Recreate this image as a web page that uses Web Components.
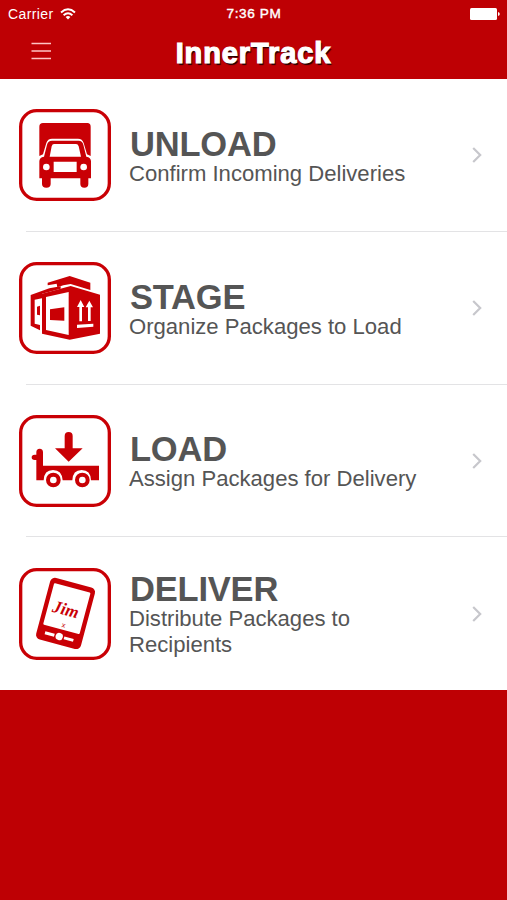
<!DOCTYPE html>
<html lang="en">
<head>
<meta charset="utf-8">
<title>InnerTrack</title>
<style>
body {
  margin: 0;
  min-height: 100vh;
  background: #be0004;
  font-family: "Liberation Sans", Arial, sans-serif;
}
</style>
</head>
<body>
<track-app></track-app>

<script>
// Icon artwork, all drawn inside the same 276 unit square frame.
const icons = {
  truck: `
    <path fill="#c90005" d="M88 168V80q0-11 11-11h133q10 0 10 11v88l-11-5-10-34q-4-13-17-13h-78q-13 0-17 13l-10 34z"/>
    <path fill="#c90005" fill-rule="evenodd" d="M88 184q0-12 14-14l9-36q3-12 15-12h80q11 0 14 12l9 36q14 2 14 14v51h-8v17q0 11-12 11t-12-11v-17h-89v17q0 11-13 11t-13-11v-17h-8z
      M119 170h94l-7-31q-2-7-8-7h-66q-5 0-7 7z M131 185v31h69v-31z"/>
    <circle cx="109" cy="201" r="10" fill="#fff"/>
    <circle cx="221" cy="201" r="10" fill="#fff"/>`,
  boxes: `
    <path fill="#c90005" d="M113 97v-8l66-20 62 20v22l-59-18-22 4-18 6-2-11z"/>
    <path fill="#c90005" d="M62 126l56-20 34-6v7l-56 15v14l-22 4v72l16 4v16l-28-14z"/>
    <path fill="#c90005" d="M81 161l9-3v29l-9-2z"/>
    <path fill="#c90005" d="M96 122l86-23 88 26v117l-91 18-83-18z"/>
    <path fill="#fff" d="M108 132l68-15v129l-68-15z"/>
    <path fill="#c90005" d="M120 169l43-6v40l-43-2z"/>
    <path fill="#fff" d="M201 162l11-21 11 21h-7v43h-8v-43z M227 163l11-20 11 20h-7v41h-8v-41z M201 215l49-3v9l-49 4z"/>`,
  cart: `
    <path fill="#c90005" d="M164 127V90q0-12 12-12t12 12v37h30l-42 40-41-40z"/>
    <path fill="#c90005" d="M79 223v-61h-5q-9 0-9-8t9-8h5v-7q0-11 10-11t10 11v40h168v44h-24q-1-31-28-31t-28 31h-29q-2-31-29-31t-28 31z"/>
    <g fill="#fff" stroke="#c90005" stroke-width="12">
      <circle cx="130" cy="222" r="16"/>
      <circle cx="217" cy="222" r="16"/>
    </g>`,
  tablet: `
    <g transform="rotate(15 167 164)">
      <rect x="97" y="68" width="139" height="191" rx="15" fill="#c90005"/>
      <rect x="110" y="84" width="113" height="129" rx="3" fill="#fff"/>
      <rect x="122" y="231" width="29" height="9" fill="#fff"/>
      <circle cx="166" cy="235" r="11" fill="#fff"/>
      <rect x="181" y="231" width="29" height="9" fill="#fff"/>
      <g fill="#c90005" text-anchor="middle">
        <text x="164" y="169" font-family="Liberation Serif, serif" font-size="52" font-weight="bold" font-style="italic" textLength="80" lengthAdjust="spacingAndGlyphs">Jim</text>
        <text x="170" y="206" font-family="Liberation Sans, sans-serif" font-size="22">x</text>
      </g>
    </g>`
}

const headerTemplate = document.createElement('template')
headerTemplate.innerHTML = `
<style>
:host {
  display: block;
  height: 79px;
  background: #be0004;
  color: #fff;
}

.status {
  display: grid;
  grid-template-columns: 1fr auto 1fr;
  align-items: center;
  height: 27px;
  padding: 0 7px 0 8px;
  font-size: 14px;
}

.carrier {
  display: flex;
  align-items: center;
  gap: 6px;
  letter-spacing: 0.4px;
}

.time {
  font-size: 13.6px;
  letter-spacing: 0.6px;
  -webkit-text-stroke: 0.4px #fff;
}

.battery {
  justify-self: end;
}

svg {
  display: block;
}

.bar {
  display: grid;
  grid-template-columns: 1fr auto 1fr;
  align-items: center;
  height: 52px;
}

.menu {
  margin: -4px 0 0 31px;
}

h1 {
  margin: 0;
  font-size: 29px;
  line-height: 52px;
  letter-spacing: 0.9px;
  -webkit-text-stroke: 1.2px #fff;
  text-shadow: 1.5px 1.5px 1px #200;
}
</style>
<div class="status">
  <div class="carrier">
    <span>Carrier</span>
    <svg width="16" height="12" viewBox="0 0 16 12">
      <g fill="none" stroke="#fff" stroke-width="1.9">
        <path d="M1 4.500q7-6.400 14 0"/>
        <path d="M3.600 7.300q4.400-4 8.800 0"/>
      </g>
      <path fill="#fff" d="M5.600 9q2.400-2 4.800 0L8 11.500z"/>
    </svg>
  </div>
  <span class="time">7:36 PM</span>
  <svg class="battery" width="30" height="12" viewBox="0 0 30 12">
    <rect width="27" height="12" rx="1.500" fill="#fff"/>
    <path fill="#fff" d="M28 4q1.800 .4 1.800 2t-1.800 2z"/>
  </svg>
</div>
<div class="bar">
  <svg class="menu" width="20" height="18" viewBox="0 0 20 18">
    <path stroke="#ffc4c4" stroke-width="1.500" d="M0.500 1.500h19.500M0.500 9h19.500M0.500 16.500h19.500"/>
  </svg>
  <h1><slot></slot></h1>
</div>
`

const rowTemplate = document.createElement('template')
rowTemplate.innerHTML = `
<style>
:host {
  display: flex;
  align-items: center;
  box-sizing: border-box;
  height: 152.75px;
  padding: 0 25px 0 19px;
  color: #555;
}

.icon {
  flex: none;
  width: 92px;
  height: 92px;
}

.text {
  flex: 1;
  padding: 1px 50px 0 18px;
}

h2 {
  margin: 0 0 -2px 1px;
  font-size: 34.5px;
  line-height: 38px;
  letter-spacing: -0.2px;
}

p {
  margin: 0;
  font-size: 22.1px;
  line-height: 26px;
}

.chevron {
  flex: none;
}
</style>
<svg class="icon" viewBox="27 27 276 276"></svg>
<div class="text">
  <h2><slot name="title"></slot></h2>
  <p><slot></slot></p>
</div>
<svg class="chevron" width="10" height="16" viewBox="0 0 10 16">
  <path fill="none" stroke="#c7c7cc" stroke-width="2.200" d="M1.200 1L8.200 8l-7 7"/>
</svg>
`

const appTemplate = document.createElement('template')
appTemplate.innerHTML = `
<style>
:host {
  display: block;
}

.list {
  background: #fff;
}

.line {
  height: 1px;
  margin: -1px 0 0 26px;
  background: #e3e3e5;
}
</style>
<app-header>InnerTrack</app-header>
<div class="list">
  <menu-row icon="truck"><span slot="title">UNLOAD</span>Confirm Incoming Deliveries</menu-row>
  <div class="line"></div>
  <menu-row icon="boxes"><span slot="title">STAGE</span>Organize Packages to Load</menu-row>
  <div class="line"></div>
  <menu-row icon="cart"><span slot="title">LOAD</span>Assign Packages for Delivery</menu-row>
  <div class="line"></div>
  <menu-row icon="tablet"><span slot="title">DELIVER</span>Distribute Packages to Recipients</menu-row>
</div>
`

customElements.define('app-header',
  /**
   * Status bar and title bar.
   */
  class extends HTMLElement {
    constructor () {
      super()
      this.attachShadow({ mode: 'open' })
        .appendChild(headerTemplate.content.cloneNode(true))
    }
  }
)

customElements.define('menu-row',
  /**
   * A row with an icon, a title and a description.
   */
  class extends HTMLElement {
    constructor () {
      super()
      this.attachShadow({ mode: 'open' })
        .appendChild(rowTemplate.content.cloneNode(true))
    }

    /**
     * Draws the framed icon named by the icon attribute.
     */
    connectedCallback () {
      this.shadowRoot.querySelector('.icon').innerHTML = `
        <rect x="32" y="32" width="266" height="266" rx="48" fill="#fff" stroke="#c90005" stroke-width="10"/>
        ${icons[this.getAttribute('icon')]}`
    }
  }
)

customElements.define('track-app',
  /**
   * The whole screen.
   */
  class extends HTMLElement {
    constructor () {
      super()
      this.attachShadow({ mode: 'open' })
        .appendChild(appTemplate.content.cloneNode(true))
    }
  }
)
</script>
</body>
</html>
